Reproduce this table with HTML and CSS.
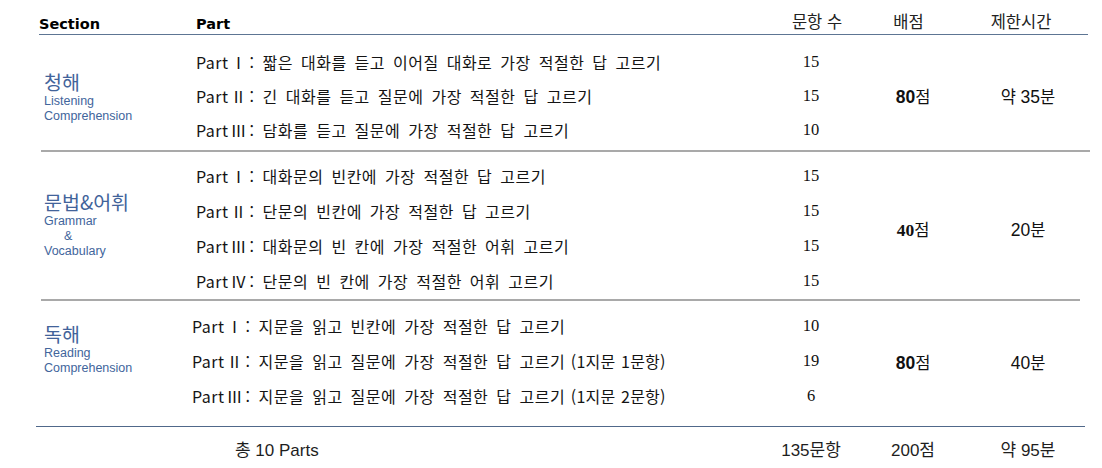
FILE: index.html
```html
<!DOCTYPE html>
<html lang="ko">
<head>
<meta charset="utf-8">
<title>시험 구성</title>
<link rel="stylesheet" href="styles.css">
</head>
<body>
<div class="sheet">
  <div class="head">
    <div class="h-sec">Section</div>
    <div class="h-part">Part</div>
    <div class="h-cnt">문항 수</div>
    <div class="h-score">배점</div>
    <div class="h-time">제한시간</div>
  </div>

  <section class="sec sec-1">
    <div class="label">
      <div class="ko">청해</div>
      <div class="en">Listening</div>
      <div class="en">Comprehension</div>
    </div>
    <div class="parts">
      <div class="prow"><span class="ptext">Part<span class="rn">Ⅰ</span>: 짧은 대화를 듣고 이어질 대화로 가장 적절한 답 고르기</span><span class="pcnt">15</span></div>
      <div class="prow"><span class="ptext">Part<span class="rn">Ⅱ</span>: 긴 대화를 듣고 질문에 가장 적절한 답 고르기</span><span class="pcnt">15</span></div>
      <div class="prow"><span class="ptext">Part<span class="rn">Ⅲ</span>: 담화를 듣고 질문에 가장 적절한 답 고르기</span><span class="pcnt">10</span></div>
    </div>
    <div class="score"><b class="n-sans">80</b>점</div>
    <div class="time">약 <span class="n">35</span>분</div>
  </section>

  <section class="sec sec-2">
    <div class="label">
      <div class="ko">문법&amp;어휘</div>
      <div class="en">Grammar</div>
      <div class="en amp">&amp;</div>
      <div class="en">Vocabulary</div>
    </div>
    <div class="parts">
      <div class="prow"><span class="ptext">Part<span class="rn">Ⅰ</span>: 대화문의 빈칸에 가장 적절한 답 고르기</span><span class="pcnt">15</span></div>
      <div class="prow"><span class="ptext">Part<span class="rn">Ⅱ</span>: 단문의 빈칸에 가장 적절한 답 고르기</span><span class="pcnt">15</span></div>
      <div class="prow"><span class="ptext">Part<span class="rn">Ⅲ</span>: 대화문의 빈 칸에 가장 적절한 어휘 고르기</span><span class="pcnt">15</span></div>
      <div class="prow"><span class="ptext">Part<span class="rn">Ⅳ</span>: 단문의 빈 칸에 가장 적절한 어휘 고르기</span><span class="pcnt">15</span></div>
    </div>
    <div class="score"><b class="n-serif">40</b>점</div>
    <div class="time"><span class="n">20</span>분</div>
  </section>

  <section class="sec sec-3">
    <div class="label">
      <div class="ko">독해</div>
      <div class="en">Reading</div>
      <div class="en">Comprehension</div>
    </div>
    <div class="parts">
      <div class="prow"><span class="ptext">Part<span class="rn">Ⅰ</span>: 지문을 읽고 빈칸에 가장 적절한 답 고르기</span><span class="pcnt">10</span></div>
      <div class="prow"><span class="ptext">Part<span class="rn">Ⅱ</span>: 지문을 읽고 질문에 가장 적절한 답 고르기<span class="note"> (1지문 1문항)</span></span><span class="pcnt">19</span></div>
      <div class="prow"><span class="ptext">Part<span class="rn">Ⅲ</span>: 지문을 읽고 질문에 가장 적절한 답 고르기<span class="note"> (1지문 2문항)</span></span><span class="pcnt">6</span></div>
    </div>
    <div class="score"><b class="n-sans">80</b>점</div>
    <div class="time"><span class="n">40</span>분</div>
  </section>

  <div class="total">
    <div class="t-sec"></div>
    <div class="t-part">총 10 Parts</div>
    <div class="t-cnt">135문항</div>
    <div class="t-score">200점</div>
    <div class="t-time">약 95분</div>
  </div>
</div>
</body>
</html>
```

FILE: styles.css
```css
html, body {
  margin: 0;
  padding: 0;
  background: #ffffff;
}

body {
  width: 1102px;
  height: 468px;
  overflow: hidden;
  font-family: "Noto Sans CJK KR", sans-serif;
  color: #111111;
}

.sheet {
  display: flex;
  flex-direction: column;
}

/* ---------- header ---------- */
.head {
  display: flex;
  align-items: flex-start;
  margin-left: 39px;
  width: 1049px;
  height: 34px;
  border-bottom: 1.5px solid #5d7593;
}

.h-sec,
.h-part {
  padding-top: 14px;
  line-height: 20px;
  font-family: "DejaVu Sans", sans-serif;
  font-weight: bold;
  font-size: 14.5px;
  color: #000;
}

.h-sec { flex: 0 0 157px; }
.h-part { flex: 0 0 580px; }

.h-cnt,
.h-score,
.h-time {
  box-sizing: border-box;
  padding-top: 11px;
  line-height: 20px;
  font-size: 16.5px;
  text-align: center;
  color: #222;
}

.h-cnt {
  flex: 0 0 70px;
  padding-left: 12px;
  white-space: nowrap;
}

.h-score {
  flex: 0 0 134px;
  padding-right: 9px;
}

.h-time {
  flex: 0 0 96px;
  padding-right: 14px;
}

/* ---------- sections ---------- */
.sec {
  display: flex;
  align-items: stretch;
  box-sizing: border-box;
}

.sec-1 {
  margin-left: 41px;
  width: 1049px;
  padding: 9px 0 3px;
  margin-top: 0.5px;
  border-bottom: 2px solid #a9a9a9;
}

.sec-2 {
  margin-left: 41px;
  width: 1039px;
  padding: 7px 0 0;
  height: 149px;
  border-bottom: 2px solid #a9a9a9;
}

.sec-3 {
  margin-left: 36px;
  width: 1049px;
  padding: 8px 0 11px;
  height: 126px;
  border-bottom: 1.5px solid #50688a;
}

.label {
  flex: 0 0 155px;
  box-sizing: border-box;
  padding-left: 3px;
  color: #456899;
}

.sec-1 .label { padding-top: 24px; }
.sec-2 .label { padding-top: 30px; }
.sec-3 .label { padding-top: 12px; flex-basis: 156px; padding-left: 8px; }

.label .ko {
  font-size: 19.5px;
  line-height: 25px;
  color: #42639a;
}

.label .en {
  font-family: "Liberation Sans", Arial, sans-serif;
  font-size: 12.5px;
  line-height: 15px;
  color: #42659c;
}

.label .amp {
  padding-left: 20px;
}

.parts {
  display: flex;
  flex-direction: column;
}

.prow {
  display: flex;
  align-items: center;
  height: 34px;
}

.sec-2 .prow { height: 35px; }
.sec-3 .prow { height: 35px; }

.ptext {
  flex: 0 0 580px;
  font-size: 16px;
  letter-spacing: 0.5px;
  word-spacing: 3px;
  line-height: 20px;
  color: #141414;
  white-space: nowrap;
}

.sec-3 .ptext { flex-basis: 584px; }

.rn {
  display: inline-block;
  width: 19px;
  margin-left: 2px;
  font-family: "Noto Sans CJK KR", sans-serif;
  letter-spacing: 0;
  text-align: left;
}

.note {
  letter-spacing: 0.2px;
  word-spacing: 1px;
}

.pcnt {
  flex: 0 0 70px;
  text-align: center;
  font-family: "Liberation Serif", "Times New Roman", serif;
  font-size: 16.5px;
  color: #111;
}

.score {
  flex: 0 0 134px;
  align-self: center;
  text-align: center;
  font-size: 16.5px;
  color: #111;
}

.time {
  flex: 0 0 96px;
  align-self: center;
  text-align: center;
  font-size: 16.5px;
  color: #111;
}

.n-sans {
  font-family: "Liberation Sans", Arial, sans-serif;
  font-weight: bold;
  font-size: 17.5px;
}

.n-serif {
  font-family: "Liberation Serif", "Times New Roman", serif;
  font-weight: bold;
  font-size: 17.5px;
}

.n {
  font-family: "Liberation Sans", Arial, sans-serif;
  font-size: 17.5px;
}

/* ---------- total ---------- */
.total {
  display: flex;
  margin-left: 36px;
  padding-top: 13px;
  line-height: 22px;
  font-family: "Liberation Sans", "Noto Sans CJK KR", sans-serif;
  font-size: 17px;
  color: #1e1e1e;
}

.t-sec { flex: 0 0 160px; }

.t-part {
  flex: 0 0 580px;
  box-sizing: border-box;
  padding-left: 39px;
}

.t-cnt {
  flex: 0 0 70px;
  text-align: center;
  white-space: nowrap;
}

.t-score {
  flex: 0 0 134px;
  text-align: center;
}

.t-time {
  flex: 0 0 96px;
  text-align: center;
  white-space: nowrap;
}
```
